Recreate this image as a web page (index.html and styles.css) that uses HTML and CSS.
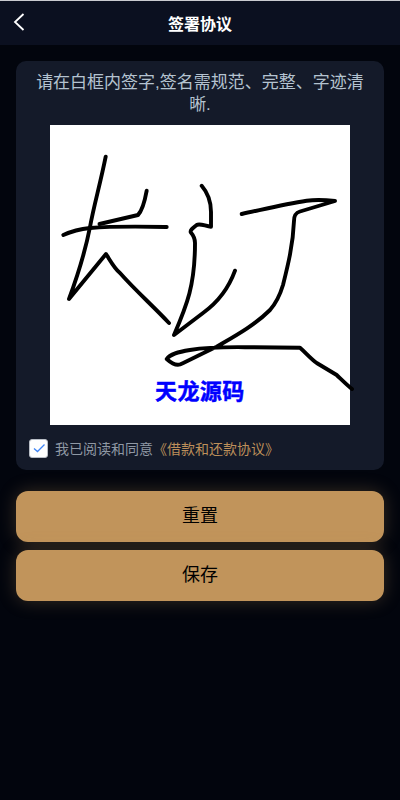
FILE: index.html
```html
<!DOCTYPE html>
<html lang="zh-CN">
<head>
<meta charset="utf-8">
<title>签署协议</title>
<link rel="stylesheet" href="styles.css">
</head>
<body>
<header class="navbar">
  <svg class="back" viewBox="0 0 12 18" width="12" height="18"><path d="M10.500 1 L2 9 L10.500 17" fill="none" stroke="#fff" stroke-width="1.800"/></svg>
  <h1 class="title">签署协议</h1>
</header>
<main class="content">
  <section class="card">
    <p class="hint">请在白框内签字,签名需规范、完整、字迹清晰.</p>
    <div class="pad">
      <svg class="sign" viewBox="50 125 300 300" width="300" height="300">
        <g fill="none" stroke="#000" stroke-width="3.900" stroke-linecap="round" stroke-linejoin="round">
          <path d="M105.700 156.700 C100 185 94 205 90 227 C84 258 76 280 69 299 L106 254 C110 260 114 268 120 273 C135 290 152 305 169 323"/>
          <path d="M99.500 224 L138 215 C143 210 145 200 146.700 190.700"/>
          <path d="M63.300 235 C72 231 80 229 90 228 C115 226 140 226.500 166.700 227"/>
          <path d="M201.700 185.700 C208 193 211 203 211 212 L211 226.700 C206 226.500 200 223 196.700 225 C193 228 190 230 190.700 232.300 C193 235 195 238 195 243 C195 285 187 305 174 335 L203 313 C217 303 228 290 235 270.700"/>
          <path d="M241.700 214 C265 209 285 204 306.700 200.700 C316 199.500 326 200 335 201 L300 211.500 C295 213 294 216 294 221 C293 245 288 265 283 285 C280 295 277 302 270 310 C255 325 235 336 216.700 346.700 C205 352 192 359 180 364.500 C175 366 170 362 166.700 359 C170 354 178 352 190 350 C205 347.500 225 347 245 347.200 L300 347.700 C305 352 311 359 316.700 363 L336.700 375 C342 380 347 385 352 389"/>
        </g>
      </svg>
      <span class="mark">天龙源码</span>
    </div>
    <div class="agree">
      <span class="check"><svg viewBox="0 0 14 12" width="14" height="12"><path d="M2 6.500 L5.500 9.500 L12.500 2.500" fill="none" stroke="#3f84f5" stroke-width="1.300"/></svg></span>
      <span class="agree-text">我已阅读和同意<a class="link">《借款和还款协议》</a></span>
    </div>
  </section>
  <button class="btn">重置</button>
  <button class="btn">保存</button>
</main>
</body>
</html>
```
FILE: styles.css
```css
* { box-sizing: border-box; }
html, body { margin: 0; padding: 0; height: 100%; }
body {
  background: #02050d;
  font-family: "Liberation Sans", "Noto Sans CJK SC", sans-serif;
  color: #fff;
}
.navbar {
  height: 45px;
  background: #0b1020;
  border-top: 1px solid #c9cbd0;
  position: relative;
  display: flex;
  align-items: center;
  justify-content: center;
}
.back { position: absolute; left: 13px; top: 12px; }
.title { margin: 0; font-size: 16px; font-weight: 700; color: #fff; }
.content { padding: 16px; display: flex; flex-direction: column; gap: 8px; }
.card {
  background: #141a29;
  border-radius: 10px;
  height: 409px;
  margin-bottom: 13px;
  padding: 11px 16px 0;
  display: flex;
  flex-direction: column;
  align-items: center;
}
.hint {
  margin: 0;
  font-size: 17px;
  line-height: 22px;
  color: #b4c3d0;
  text-align: center;
}
.pad {
  position: relative;
  width: 300px;
  height: 300px;
  margin-top: 9px;
  background: #fff;
  flex: none;
}
.sign { display: block; overflow: visible; }
.mark {
  position: absolute;
  left: 105px;
  top: 255px;
  font-size: 22px;
  line-height: 24px;
  font-weight: 700;
  letter-spacing: 0.4px;
  color: #0000ff;
  -webkit-text-stroke: 0.5px #0000ff;
  white-space: nowrap;
}
.agree {
  align-self: flex-start;
  display: flex;
  align-items: center;
  gap: 7px;
  margin-top: 13px;
  margin-left: -3px;
}
.check {
  width: 19px;
  height: 19px;
  background: #fff;
  border: 1px solid #b9bec6;
  border-radius: 3px;
  display: flex;
  align-items: center;
  justify-content: center;
}
.agree-text { font-size: 14px; color: #8f98a4; }
.link { color: #bd8f5a; }
.btn {
  height: 51px;
  border: 0;
  border-radius: 12px;
  background: #c1945b;
  box-shadow: 0 0 18px rgba(193, 148, 91, 0.28);
  font-family: inherit;
  font-size: 18px;
  color: #000;
  padding: 0 0 6px;
}
```
